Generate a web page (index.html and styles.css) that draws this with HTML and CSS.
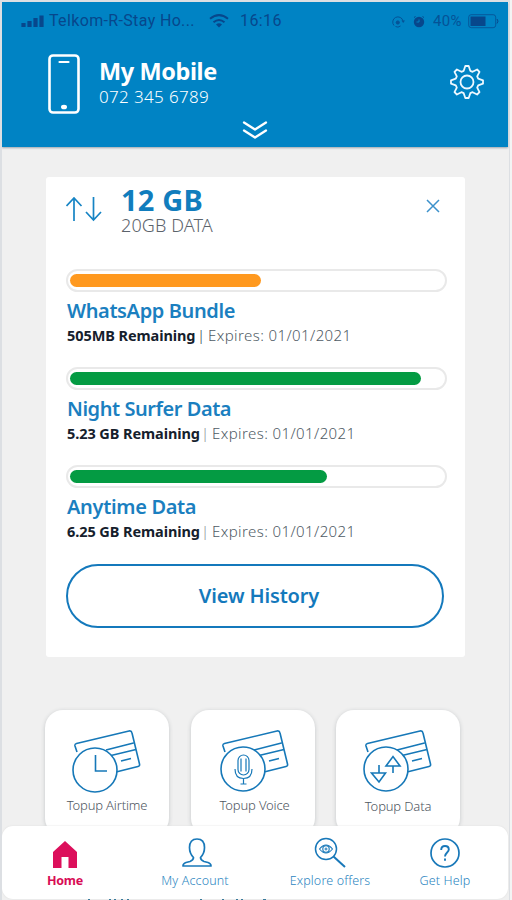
FILE: index.html
```html
<!DOCTYPE html>
<html lang="en">
<head>
<meta charset="utf-8">
<title>My Mobile</title>
<link rel="stylesheet" href="styles.css">
</head>
<body>
<div class="screen">
  <header class="header">
    <div class="status">
      <svg class="signal" width="24" height="14" viewBox="0 0 24 14"><path d="M3.500 9v4M9.500 7v6M15.500 4v9M21.500 1.500V13" stroke="currentColor" stroke-width="4.200" stroke-linecap="butt"/></svg>
      <span class="carrier">Telkom-R-Stay Ho...</span>
      <svg class="wifi" width="20" height="14" viewBox="0 0 20 14" fill="none" stroke="currentColor" stroke-width="2"><path d="M1 4.800Q10-2.500 19 4.800M4.500 8.300Q10 3.800 15.500 8.300"/><path d="M7 10.500Q10 8 13 10.500L10 13.500Z" fill="currentColor" stroke="none"/></svg>
      <span class="time">16:16</span>
      <svg class="lock" width="14" height="13" viewBox="0 0 14 13" fill="none" stroke="currentColor"><path d="M3 10.500A5.200 5.200 0 1 1 12 6M4.500 11.500Q7 13 9.500 11" stroke-width="1"/><path d="M10.500 5.500h3.500L12.200 8z" fill="currentColor" stroke="none"/><circle cx="6.800" cy="7.500" r="1.600" fill="currentColor"/></svg>
      <svg class="alarm" width="12" height="13" viewBox="0 0 12 13"><circle cx="6" cy="7" r="5.200" fill="currentColor"/><path d="M1 2.500l1.500-1M11 2.500L9.500 1.500" stroke="currentColor" stroke-width="1"/><path d="M6 4.500v2.500H3.500" stroke="#0083c4" fill="none"/></svg>
      <span class="percent">40%</span>
      <svg class="battery" width="31" height="15" viewBox="0 0 31 15"><rect x=".7" y=".7" width="27" height="13" rx="2.500" fill="none" stroke="currentColor" opacity=".7"/><rect x="2.500" y="2.500" width="15" height="9.500" fill="currentColor"/><path d="M29 5q2 2 0 4.500" fill="none" stroke="currentColor"/></svg>
    </div>
    <div class="account">
      <svg class="phone" width="32" height="60" viewBox="0 0 32 60" fill="none" stroke="#fff"><rect x="1.500" y="1.500" width="29" height="57" rx="3.500" stroke-width="2.600"/><path d="M11.500 8h9" stroke-width="2.200" stroke-linecap="round"/><ellipse cx="16" cy="53" rx="3" ry="2.300" fill="#fff" stroke="none"/></svg>
      <div class="account-text">
        <h1>My Mobile</h1>
        <p>072 345 6789</p>
      </div>
      <svg class="gear" width="36" height="36" viewBox="-18 -18 36 36" fill="none" stroke="#eef8ff" stroke-width="1.800" stroke-linejoin="round"><circle r="6.500"/><path d="M-3.300-11.200L-1.700-16H1.700L3.300-11.200L5.600-10.200L10.100-12.500L12.500-10.100L10.200-5.600L11.200-3.300L16-1.700V1.700L11.200 3.300L10.200 5.600L12.500 10.100L10.100 12.500L5.600 10.200L3.300 11.200L1.700 16H-1.700L-3.300 11.200L-5.600 10.200L-10.100 12.500L-12.500 10.100L-10.200 5.600L-11.200 3.300L-16 1.700V-1.700L-11.200-3.300L-10.200-5.600L-12.500-10.100L-10.100-12.500L-5.600-10.200Z"/></svg>
    </div>
    <svg class="expand" width="26" height="20" viewBox="0 0 26 20" fill="none" stroke="#fff" stroke-width="2.300" stroke-linecap="round" stroke-linejoin="round"><path d="M2 2.500L13 9.500L24 2.500M2 10.500L13 17.500L24 10.500"/></svg>
  </header>

  <main>
    <section class="card">
      <div class="card-head">
        <svg class="arrows" width="38" height="26" viewBox="0 0 38 26" fill="none" stroke="#1684c4" stroke-width="1.700"><path d="M8 25V2M.5 10L8 2l7.500 8M27.500 1v23M20 16l7.500 8 7.500-8"/></svg>
        <div class="card-total">
          <h2>12 GB</h2>
          <p>20GB DATA</p>
        </div>
        <svg class="close" width="14" height="14" viewBox="0 0 14 14" stroke="#3c91cb" stroke-width="1.500"><path d="M1 1l12 12M13 1L1 13"/></svg>
      </div>
      <div class="bundle">
        <div class="bar"><div class="fill orange" style="width:191px"></div></div>
        <h3 class="t1">WhatsApp Bundle</h3>
        <p class="meta m1"><b>505MB Remaining</b><i class="sep dark">|</i><span>Expires: 01/01/2021</span></p>
      </div>
      <div class="bundle">
        <div class="bar"><div class="fill" style="width:351px"></div></div>
        <h3 class="t2">Night Surfer Data</h3>
        <p class="meta"><b>5.23 GB Remaining</b><i class="sep">|</i><span>Expires: 01/01/2021</span></p>
      </div>
      <div class="bundle">
        <div class="bar"><div class="fill" style="width:257px"></div></div>
        <h3 class="t3">Anytime Data</h3>
        <p class="meta"><b>6.25 GB Remaining</b><i class="sep">|</i><span>Expires: 01/01/2021</span></p>
      </div>
      <button class="history">View History</button>
    </section>

    <section class="tiles">
      <div class="tile airtime">
        <svg width="72" height="66" viewBox="0 0 72 66" fill="none" stroke="#1678b8" stroke-width="1.600"><path d="M6 22L4 16Q3.500 14 5.500 13.500L58 1Q60.500.5 61 3L68.500 34Q69 36 67 36.500L45 42M35 20L62.500 13M40 25.500L65 19.500M50 31L60 28.500"/><circle cx="24" cy="40" r="22" fill="#fff"/><path d="M24.500 25v16H36"/></svg>
        <span>Topup Airtime</span>
      </div>
      <div class="tile voice">
        <svg width="72" height="66" viewBox="0 0 72 66" fill="none" stroke="#1678b8" stroke-width="1.600"><path d="M6 22L4 16Q3.500 14 5.500 13.500L58 1Q60.500.5 61 3L68.500 34Q69 36 67 36.500L45 42M35 20L62.500 13M40 25.500L65 19.500M50 31L60 28.500"/><circle cx="24" cy="39" r="22" fill="#fff"/><g stroke-width="1.200"><rect x="19" y="25" width="11" height="20" rx="5.500"/><path d="M16 39Q16 48.500 24.500 48.500T33 39M24.500 48.500V54M21.500 54h6M22 28.500v13M27 28.500v13"/></g></svg>
        <span>Topup Voice</span>
      </div>
      <div class="tile data">
        <svg width="72" height="66" viewBox="0 0 72 66" fill="none" stroke="#1678b8" stroke-width="1.600"><path d="M6 22L4 16Q3.500 14 5.500 13.500L58 1Q60.500.5 61 3L68.500 34Q69 36 67 36.500L45 42M35 20L62.500 13M40 25.500L65 19.500M50 31L60 28.500"/><circle cx="24" cy="39" r="22" fill="#fff"/><path d="M17 35v8M9.500 43h14L17 52ZM24 36h14L31 26.500ZM31 36v7"/></svg>
        <span>Topup Data</span>
      </div>
    </section>
  </main>

  <nav class="nav">
    <a class="home"><svg width="24" height="27" viewBox="0 0 24 27"><path d="M12 0L24 11V27H15.500V16H8.500V27H0V11Z" fill="#dc0f5b"/></svg><span>Home</span></a>
    <a class="me"><svg width="30" height="30" viewBox="0 0 30 30" fill="none" stroke="#1878b9" stroke-width="1.700" stroke-linejoin="round"><path d="M11.500 19.500Q7.500 15.500 7.500 9.500C7.500 4 10 1 15 1s7.500 3 7.500 8.500Q22.500 15.500 18.500 19.500Q18.500 22 22 23.500L26 24.500Q29 25.500 29 28H1Q1 25.500 4 24.500L8 23.500Q11.500 22 11.500 19.500Z"/></svg><span>My Account</span></a>
    <a class="offers"><svg width="32" height="31" viewBox="0 0 32 31" fill="none" stroke="#1878b9" stroke-width="1.500"><circle cx="12" cy="12" r="10.500"/><path d="M19.500 19.500L31 30" stroke-width="2"/><path d="M5.500 12Q12 4 18.500 12Q12 20 5.500 12Z" stroke-width="1.100"/><circle cx="12" cy="12" r="3.200" stroke-width="1.100"/><circle cx="12" cy="12" r="1" stroke-width="1"/></svg><span>Explore offers</span></a>
    <a class="help"><svg width="30" height="30" viewBox="0 0 30 30" fill="none" stroke="#1878b9" stroke-width="1.700"><circle cx="15" cy="15" r="14"/><path d="M11.200 12Q11.200 8 15 8T18.800 11.500C18.800 14.500 15 14.500 15 18.500M15 20.500v2.200" stroke-width="1.900"/></svg><span>Get Help</span></a>
  </nav>
  <svg class="peek" width="190" height="2" viewBox="0 0 190 2"><path d="M1 1h2M22 1h2M27 1h2M34 1h2M40 1h2M113 1h2M135 1h2M149 1h2M154 1h2M176 1h3" stroke="#3a7b9c" stroke-width="2"/></svg>
</div>
</body>
</html>
```
FILE: styles.css
```css
* { box-sizing: border-box; }
body {
  margin: 0;
  width: 512px;
  height: 900px;
  overflow: hidden;
  background: #f3f4f4;
  font-family: "Noto Sans", sans-serif;
}
h1, h2, h3, p { margin: 0; white-space: nowrap; }
svg { display: block; flex: none; }
.screen {
  position: relative;
  width: 510px;
  height: 900px;
  border: solid #dcdfe3;
  border-width: 2px 1px 0 2px;
  background: #f0f0f0;
  overflow: hidden;
}
.header {
  height: 145px;
  width: 506px;
  background: #0083c4;
  box-shadow: 0 1px 2px #9aa4ad;
}
.status {
  display: flex;
  align-items: center;
  height: 38px;
  padding-left: 18px;
  color: #07478c;
  font: 16px/38px Roboto, sans-serif;
}
.carrier { width: 147px; margin-left: 5px; letter-spacing: .35px; white-space: nowrap; }
.wifi { margin-left: 13px; }
.time { width: 42px; margin-left: 11px; letter-spacing: .4px; }
.lock { margin-left: 109px; opacity: .8; }
.alarm { margin-left: 8px; }
.percent { width: 31px; margin-left: 8px; font-size: 15px; letter-spacing: .3px; opacity: .8; }
.battery { margin-left: 4px; }
.account { display: flex; height: 76px; padding: 14px 23px 0 46px; color: #fff; }
.account-text { margin: 4px 0 0 19px; flex: 1; }
h1 { font-size: 23.500px; line-height: 27px; font-weight: 700; letter-spacing: -.4px; }
.account-text p { font-size: 17px; line-height: 24px; font-weight: 300; letter-spacing: .35px; }
.gear { margin-top: 10px; }
.expand { margin: 4px 0 0 240px; }

.card {
  width: 419px;
  height: 480px;
  margin: 30px 0 0 44px;
  padding: 8px 18px 0 20px;
  border-radius: 3px;
  background: #fff;
}
.card-head { display: flex; height: 84px; }
.arrows { margin-top: 11px; }
.card-total { flex: 1; margin-left: 17px; }
h2 { font-size: 29px; line-height: 30px; letter-spacing: .2px; color: #117dbd; }
.card-total p { font-size: 18px; line-height: 20px; font-weight: 300; letter-spacing: .1px; color: #5b636b; }
.close { margin: 14px 7px 0 0; }
.bundle { height: 98px; }
.bar {
  width: 381px;
  height: 23px;
  padding: 3px 2px;
  border: 2px solid #e9e9e9;
  border-radius: 12px;
}
.fill { height: 13px; border-radius: 7px; background: #049b43; }
.fill.orange { background: #ff991f; }
h3 { margin: 6px 0 0 1px; font-size: 20px; line-height: 26px; font-weight: 600; color: #1b7fc0; }
.t1 { letter-spacing: -.38px; }
.t2 { letter-spacing: -.45px; }
.t3 { letter-spacing: -.33px; }
.meta { display: flex; margin-left: 1px; font-size: 15px; line-height: 22px; font-weight: 300; letter-spacing: .41px; color: #4f5b65; }
.meta b { width: 133px; font-weight: 700; font-size: 14.500px; color: #15202c; letter-spacing: -.08px; }
.meta.m1 b { width: 129px; }
.sep { width: 12px; padding-left: 1px; font-style: normal; color: #8b9198; }
.sep.dark { color: #303a45; }
.history {
  display: block;
  width: 378px;
  height: 64px;
  margin-top: 1px;
  padding: 0 0 1px 8px;
  border: 2px solid #1479bc;
  border-radius: 32px;
  background: #fff;
  color: #1479bc;
  font: 600 20px "Noto Sans", sans-serif;
  letter-spacing: -.15px;
}

.tiles { display: grid; grid-template-columns: repeat(3, 124px); gap: 21.500px; margin: 53px 0 0 43px; }
.tile {
  display: flex;
  flex-direction: column;
  align-items: center;
  height: 126px;
  padding-top: 20px;
  border-radius: 18px;
  background: #fff;
  box-shadow: 0 1px 4px #c3c6c8;
  color: #4f575f;
  font-size: 13px;
  font-weight: 300;
  letter-spacing: -.15px;
  white-space: nowrap;
}
.tile span { line-height: 18px; }
.tile.voice { padding-left: 4px; }
.tile.data span { padding-top: 1px; }

.nav {
  position: absolute;
  left: 0;
  top: 824px;
  display: grid;
  grid-template-columns: 126px 134px 136px 94px;
  width: 506px;
  height: 73px;
  border-radius: 11px;
  background: #fff;
  box-shadow: 0 0 2px #ddd;
  color: #2c86c1;
  font-size: 12.500px;
  font-weight: 300;
  letter-spacing: .15px;
}
.nav a { display: flex; flex-direction: column; align-items: center; justify-content: flex-end; padding-bottom: 9px; white-space: nowrap; }
.nav span { line-height: 18px; margin-top: 4px; }
.nav .home { color: #d80c55; font-weight: 700; letter-spacing: -.2px; }
.nav .me svg { margin-left: 3px; }
.peek { position: absolute; left: 85px; top: 897px; }
```
